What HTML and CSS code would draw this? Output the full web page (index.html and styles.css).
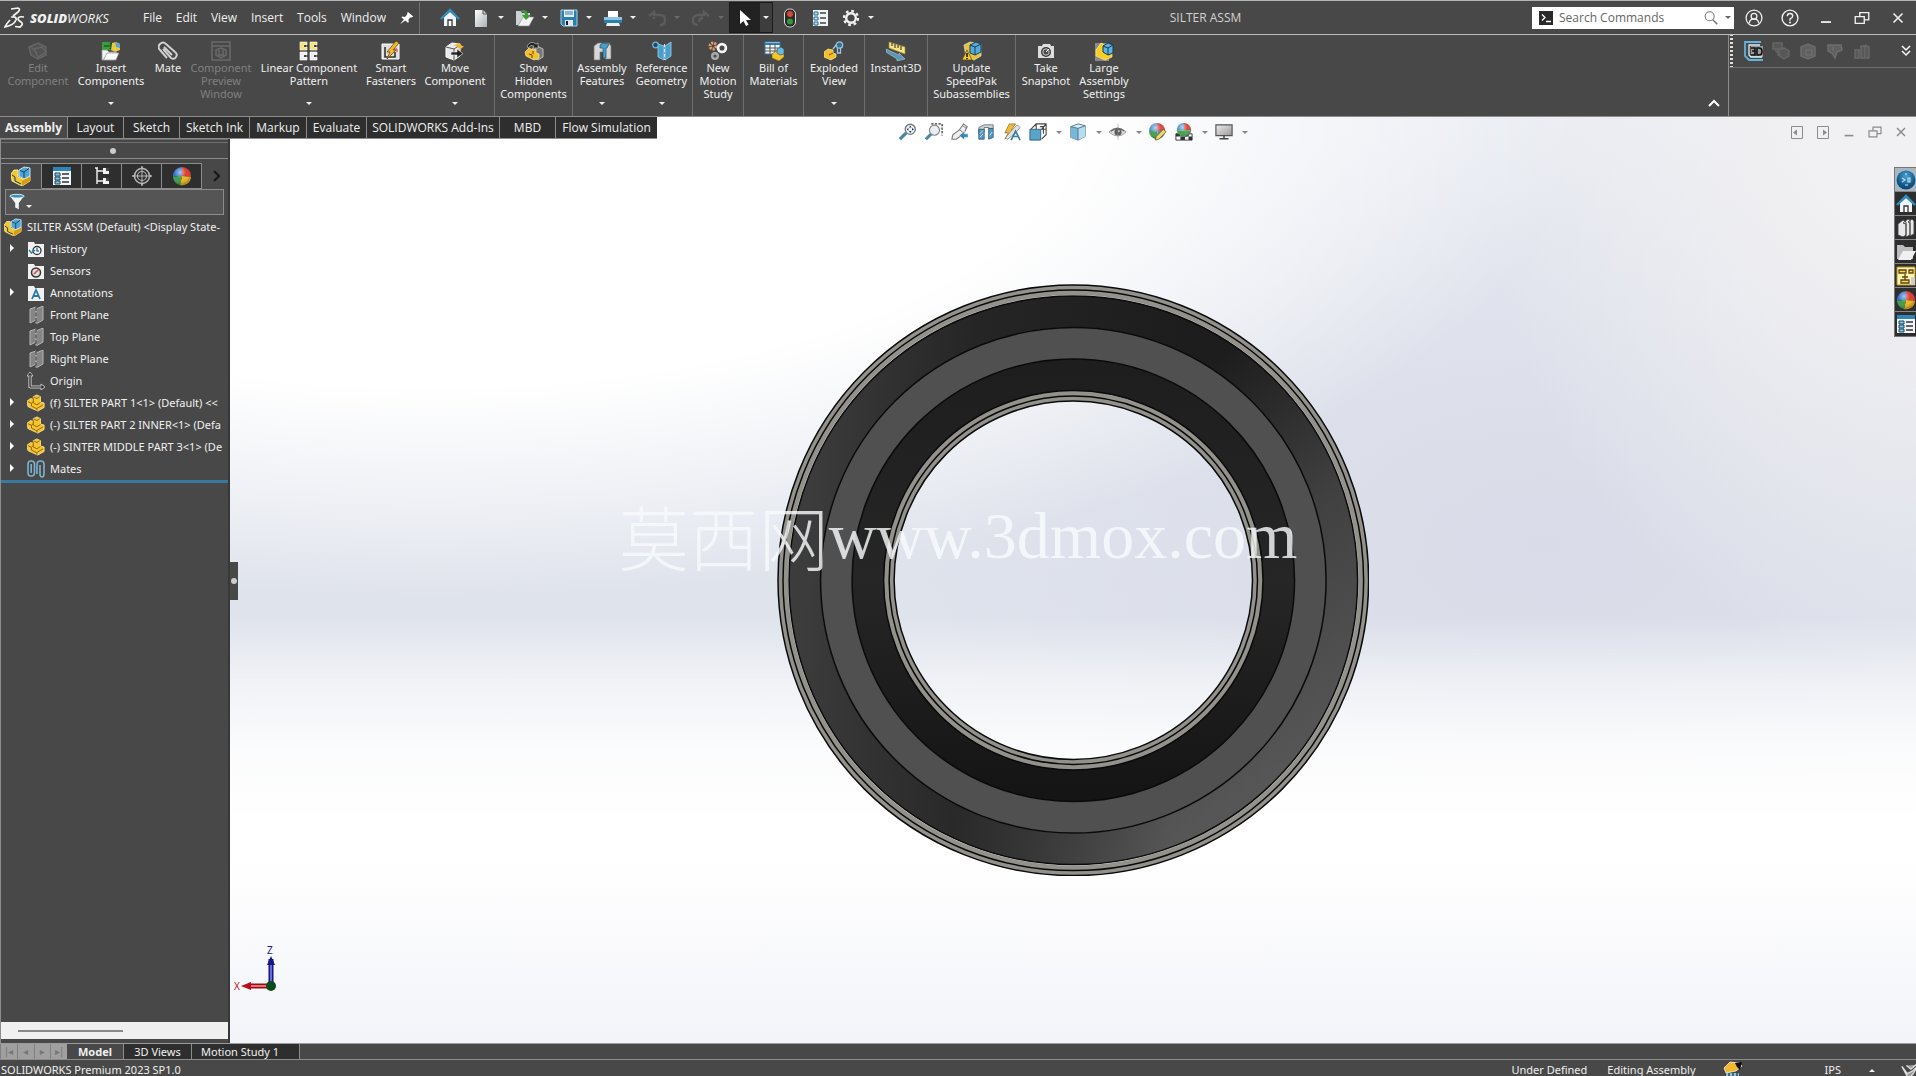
FILE: index.html
```html
<!DOCTYPE html>
<html lang="en">
<head>
<meta charset="utf-8">
<title>SILTER ASSM - SOLIDWORKS</title>
<link rel="stylesheet" href="styles.css">
</head>
<body>
<svg class="sprite" aria-hidden="true">
  <defs>
    <linearGradient id="steel" x1="0" y1="0" x2="1" y2="1"><stop offset="0" stop-color="#fff"/><stop offset="1" stop-color="#a9b0b5"/></linearGradient>
    <linearGradient id="screen" x1="0" y1="0" x2="1" y2="1"><stop offset="0" stop-color="#eee"/><stop offset="1" stop-color="#999"/></linearGradient>
    <radialGradient id="globe" cx=".5" cy=".3" r=".8"><stop offset="0" stop-color="#4aa0d0"/><stop offset=".6" stop-color="#125a8c"/><stop offset="1" stop-color="#073a60"/></radialGradient>
    <radialGradient id="shine" cx=".4" cy=".3" r=".7"><stop offset="0" stop-color="#fff" stop-opacity=".6"/><stop offset=".5" stop-color="#fff" stop-opacity="0"/><stop offset="1" stop-color="#000" stop-opacity=".3"/></radialGradient>
  </defs>
  <symbol id="home" viewBox="0 0 20 20"><path d="M4 9v9h12V9l-6-5z" fill="#eef4f8"/><path d="M1 11l9-9 9 9" fill="none" stroke="#2f8fc0" stroke-width="2.4"/><path d="M8 18v-6h4v6" fill="#fff" stroke="#333" stroke-width="1.3"/></symbol>
  <symbol id="page" viewBox="0 0 20 20"><path d="M4 2h8l4 4v13H4z" fill="url(#steel)"/><path d="M12 2v4h4" fill="none" stroke="#555"/></symbol>
  <symbol id="open" viewBox="0 0 20 20"><path d="M1 3h5l1 2h8v12H1z" fill="#c9d3d6"/><path d="M3 18L8 9h11l-5 9z" fill="#f4f4f4" stroke="#888" stroke-width=".6"/><path d="M5 3c4-2 8-1 8 4h3l-5 5-4-5h3c0-2-2-3-5-4z" fill="#3f9a35"/></symbol>
  <symbol id="save" viewBox="0 0 20 20"><path d="M2 2h16v16H4l-2-2z" fill="#2a7fae" stroke="#9fd0ea" stroke-width="1"/><path d="M5 2h10v7H5z" fill="#e6eef2"/><path d="M6 4h8M6 6h8" stroke="#2a7fae"/><path d="M6 12h8v6H6z" fill="#dfe7ea"/><path d="M8 13v4" stroke="#123" stroke-width="2"/></symbol>
  <symbol id="print" viewBox="0 0 20 20"><path d="M5 3h10v6H5z" fill="#fff"/><path d="M1 9h18v5H1z" fill="#8fc4e0"/><path d="M1 12h18v3H1z" fill="#2a7fae"/><path d="M4 15h12l1 3H3z" fill="#f2f2f2"/></symbol>
  <symbol id="undo" viewBox="0 0 20 20"><path d="M2 8l5-4v3h6q5 0 5 5t-5 5M7 11v-2" fill="none" stroke="#5c5c5c" stroke-width="2.4"/></symbol>
  <symbol id="redo" viewBox="0 0 20 20"><path d="M18 8l-5-4v3H8q-6 0-6 5t5 5M12 10q-4 0-4 4" fill="none" stroke="#5c5c5c" stroke-width="2.4"/></symbol>
  <symbol id="cursor" viewBox="0 0 20 20"><path d="M5 2v14l3.500-3 2.500 5 2.600-1.200L11 12h5z" fill="#fff"/></symbol>
  <symbol id="lights" viewBox="0 0 20 20"><rect x="4.500" y="1" width="11" height="18" rx="5" fill="#2b2b2b" stroke="#ddd"/><circle cx="10" cy="6" r="3" fill="#d8463c"/><circle cx="10" cy="13.500" r="3" fill="#2f9a3a"/></symbol>
  <symbol id="options" viewBox="0 0 20 20"><path d="M3 2h15v16H3z" fill="#eef3f6"/><path d="M4 4h4v3H4zM4 9h4v3H4zM4 14h4v3H4z" fill="#bfe0f0" stroke="#25688f"/><path d="M10 5h6M10 10h6M10 15h6" stroke="#444" stroke-width="1.4"/></symbol>
  <symbol id="gear" viewBox="0 0 20 20"><circle cx="10" cy="10" r="4.800" fill="none" stroke="#f2f2f2" stroke-width="2.400"/><circle cx="10" cy="10" r="7" fill="none" stroke="#f2f2f2" stroke-width="2.400" stroke-dasharray="2.750 2.750"/></symbol>
  <symbol id="pin" viewBox="0 0 20 20"><path d="M11 1l8 7-2 1-3 .5-2 3 .5 3-1 1.500-4-3.500L0 19l5.500-7L2 9l1.500-1 3.500.5 3-3z" fill="#fff"/></symbol>
  <symbol id="user" viewBox="0 0 20 20"><g fill="none" stroke="#f2f2f2" stroke-width="1.400"><circle cx="10" cy="10" r="8.800"/><circle cx="10" cy="8" r="3.200"/><path d="M4.500 16q1-5 5.500-5t5.500 5"/></g></symbol>
  <symbol id="help" viewBox="0 0 20 20"><g fill="none" stroke="#f2f2f2" stroke-width="1.500"><circle cx="10" cy="10" r="8.800"/><path d="M7 8q0-3 3-3t3 2.700Q13 9.500 10 11v2"/></g><circle cx="10" cy="15" r="1.100" fill="#f2f2f2"/></symbol>
  <symbol id="min" viewBox="0 0 20 20"><path d="M4.500 14.500h11" stroke="currentColor" stroke-width="2"/></symbol>
  <symbol id="restore" viewBox="0 0 20 20"><path d="M7.500 8V4h10v8h-5M2.500 8.500h10V16h-10z" fill="none" stroke="currentColor" stroke-width="1.500"/></symbol>
  <symbol id="close" viewBox="0 0 20 20"><path d="M5 5l10 10M15 5L5 15" stroke="currentColor" stroke-width="1.800"/></symbol>
  <symbol id="lens" viewBox="0 0 20 20"><circle cx="8.500" cy="8" r="5" fill="none" stroke="#777" stroke-width="1.200"/><path d="M12 12l5 5" stroke="#777" stroke-width="1.800"/></symbol>
  <symbol id="prompt" viewBox="0 0 14 14"><path d="M0 0h14v14H0z" fill="#2a2a2a"/><path d="M3 3.500L6 6.500l-3 3M7 10.500h5" fill="none" stroke="#fff" stroke-width="1.300"/></symbol>
  <symbol id="asm" viewBox="0 0 20 20"><path d="M0 8l3-4 4 0v7l5 2 7-3v5l-8 5L1 15z" fill="#f3c62c" stroke="#fff0a8" stroke-width=".9"/><path d="M11 15l8-5v5l-8 5z" fill="#d99c12"/><path d="M8 4l5-3 6 1v8l-6 3-5-3z" fill="#4ea6d6" stroke="#d6effa" stroke-width=".9"/><path d="M9 4.500l4 1.500v6M13 6l5-3.500M1 9l3 2v4l6 3" fill="none" stroke="#173f5a"/></symbol>
  <symbol id="part" viewBox="0 0 20 20"><path d="M0 8l4-3 3 1V3l4-2 4 2v6l4 1v5l-7 4L1 14z" fill="#f6c52b" stroke="#ffe79a" stroke-width=".9"/><path d="M1 8.500l4 2v3l6 3v2M5 10l2-1.500M11 16l7-4M7 4v6l4 2 4-2.500M8 3.500l3 1.500 3-2" fill="none" stroke="#8a5f08" stroke-width="1"/></symbol>
  <symbol id="editcomp" viewBox="0 0 20 20"><path d="M1 6l9-4 8 4v8l-8 4-7-4zM6 8l8-2 4 5-8 5zM3 6l6 6" fill="#525252" stroke="#666" stroke-width="1.400"/></symbol>
  <symbol id="insertcomp" viewBox="0 0 20 20"><path d="M1 1h9v8H1z" fill="#3a9c3e"/><path d="M3 5h8M9 2l3 3-3 3" fill="none" stroke="#173c1a" stroke-width="1.200"/><path d="M11 2l4-1 4 2v6l-5 2-4-2z" fill="#efc93a"/><path d="M14 1l5 2v4l-4-1z" fill="#54a9d8"/><path d="M1 19V9h5l2 2h8l-2 8z" fill="#f4f4f4" stroke="#999" stroke-width=".8"/><path d="M3 18l3-6h12l-3 7H2z" fill="#fff" stroke="#8a8a8a" stroke-width=".7"/></symbol>
  <symbol id="clip" viewBox="0 0 20 20"><path d="M5 8l8 9q3 2 5-1t-1-5L8 3Q5 0 2 3t0 6l7 8M6 6l8 8" fill="none" stroke="#d2d2d2" stroke-width="1.900"/></symbol>
  <symbol id="preview" viewBox="0 0 20 20"><path d="M1 1h18v18H1zM1 5h18M5 9l5-2 5 2v5l-5 3-5-3zM8 9v5h4V9" fill="none" stroke="#6a6a6a" stroke-width="1.500"/></symbol>
  <symbol id="pattern" viewBox="0 0 20 20"><g stroke="#fff" stroke-width=".6"><path d="M1 1h7v3H5v2h3v3H1zM11 1h7v3h-3v2h3v3h-7z" fill="#f5e27a"/><path d="M1 11h7v3H5v2h3v3H1zM11 11h7v3h-3v2h3v3h-7z" fill="#eee"/></g><path d="M6 4v2M16 4v2M6 14v2M16 14v2" stroke="#222" stroke-width="1.400"/></symbol>
  <symbol id="fastener" viewBox="0 0 20 20"><path d="M1 3h17v15H1z" fill="#ddd" stroke="#fff"/><path d="M4 6v10h10v-5" fill="none" stroke="#333" stroke-width="1.600"/><path d="M11 8h5v3" fill="none" stroke="#c33"/><path d="M15 0l3 2-6 7h3l-9 9 3-7H6z" fill="#f5b82c" stroke="#6b4a0a" stroke-width=".8"/></symbol>
  <symbol id="movecomp" viewBox="0 0 20 20"><path d="M1 6l6-4 8 1v12l-6 4-8-3z" fill="#e9e9e9" stroke="#fff"/><path d="M1 6l8 2v11M9 8l6-4" fill="none" stroke="#555"/><path d="M6 11h6V8l6 4.500-6 4.500v-3H6z" fill="#222" stroke="#eee" stroke-width=".6"/><path d="M9 5q5-6 8 0h2l-4 4-3-4" fill="#f0b83a"/></symbol>
  <symbol id="showhide" viewBox="0 0 20 20"><path d="M8 8l5-3 6 3v8l-5 3-6-3z" fill="#777" stroke="#ccc" stroke-width=".9"/><path d="M1 11l4-4 4 2 3-1v4l3 1v4l-5 2-8-4z" fill="#f3c02c" stroke="#fbe9a0" stroke-width=".7"/><path d="M5 13l3 1v3M9 10v3" fill="none" stroke="#5e4307"/><path d="M3 5q4-6 9-2l2-1v5H9l1-2Q7 3 4 7z" fill="#222" stroke="#bbb" stroke-width=".7"/></symbol>
  <symbol id="features" viewBox="0 0 20 20"><path d="M2 5l4-3h11l2 3v13h-6v-7H8v8H2z" fill="#d8d8d8" stroke="#777" stroke-width=".7"/><path d="M8 4l3-2 6 1-2 4h-1v10h-3V7L8 7z" fill="#4a9ecb" stroke="#1c4d69" stroke-width=".7"/></symbol>
  <symbol id="refgeo" viewBox="0 0 20 20"><path d="M6 3l6 2v14l-6-3zM13 5l6-4v14l-6 4z" fill="#4a9ecb" stroke="#9ed3ef" stroke-width=".8"/><path d="M12.500 3v16" stroke="#cfe9f7" stroke-dasharray="3 2"/><circle cx="3.500" cy="4" r="2.800" fill="#23485c" stroke="#6fb7dc" stroke-width="1.300"/></symbol>
  <symbol id="motion" viewBox="0 0 20 20"><circle cx="5" cy="5" r="3" fill="none" stroke="#e79a72" stroke-width="3" stroke-dasharray="2 1"/><circle cx="14" cy="7" r="3.900" fill="none" stroke="#f5f5f5" stroke-width="2.700"/><circle cx="7" cy="15" r="2.800" fill="none" stroke="#aaa" stroke-width="2.400"/></symbol>
  <symbol id="bom" viewBox="0 0 20 20"><path d="M1 1h15v12H1z" fill="#f2f6f8" stroke="#2a7fae"/><path d="M1 3h15" stroke="#2a7fae" stroke-width="2"/><path d="M1 7h15M1 10h15M6 3v10M11 3v10" stroke="#555"/><path d="M8 13l4-3 8 2v4l-5 4-7-3z" fill="#f3c62c" stroke="#8a6510" stroke-width=".7"/><path d="M13 8l4-2 3 2v5l-4 1-3-2z" fill="#6cb9e0" stroke="#1c4d69" stroke-width=".6"/></symbol>
  <symbol id="explode" viewBox="0 0 20 20"><path d="M0 11l4-3 5 1v3l3 1v3l-5 3-7-3z" fill="#f3c02c" stroke="#fbe9a0" stroke-width=".7"/><path d="M5 14l4-2" stroke="#765009"/><circle cx="15.500" cy="4" r="3.200" fill="#3c6e89" stroke="#8fc6e4" stroke-width="1.300"/><path d="M13.500 7v5h3V7M9 8l3-4" stroke="#9cc9df" fill="none" stroke-width="1.300"/></symbol>
  <symbol id="instant" viewBox="0 0 20 20"><path d="M3 1l16 5v7L3 7z" fill="#f4e486" stroke="#a78f20" stroke-width=".6"/><path d="M6 2v3M9 3v4M12 4v3M15 5v4" stroke="#333" stroke-width="1.100"/><path d="M0 8l13 6v-2l6 6-8 2v-2L0 11z" fill="#5b97b8" stroke="#c4dbe6" stroke-width=".5"/></symbol>
  <symbol id="speedpak" viewBox="0 0 20 20"><path d="M2 4l6-3 11 2v12l-7 4-8-3z" fill="#e8c53c" stroke="#ddd" stroke-width=".7"/><path d="M8 4l6-3 5 2v8l-6 3-5-2z" fill="#58abd8" stroke="#173f5a"/><path d="M13 6v8M8 4l5 2 6-3" stroke="#173f5a" fill="none"/><path d="M5 9l5 10H0z" fill="#f9c634" stroke="#5c430a" stroke-width=".7"/><path d="M5 12v4M5 17v1.200" stroke="#111" stroke-width="1.500"/></symbol>
  <symbol id="camera" viewBox="0 0 20 20"><path d="M2 5h4l1-2h7l1 2h3v12H2z" fill="#ddd"/><circle cx="10" cy="11" r="5" fill="#3a3a3a"/><circle cx="10" cy="11" r="3.200" fill="#4c4c4c" stroke="#ccc"/><path d="M10 11l3-3" stroke="#fff"/></symbol>
  <symbol id="bigasm" viewBox="0 0 20 20"><path d="M1 2h14v18H1z" fill="#8a8a8a"/><path d="M2 9l5-7 4 2v6l7 0v6l-7 3-9-4z" fill="#f8ce26" stroke="#ffeb90" stroke-width=".7"/><path d="M9 5l5-3 5 2v8l-5 2-5-3z" fill="#5cb4e4" stroke="#12384f"/><path d="M9 5l5 2v7M14 7l5-3" fill="none" stroke="#12384f"/></symbol>
  <symbol id="mark3d" viewBox="0 0 20 20"><path d="M7 5h12v11H7z" fill="#9a9a9a"/><path d="M17 1H1v14l4 4h14" fill="none" stroke="#62b3dc" stroke-width="1.800"/><path d="M16 4H5v10l2 2h11" fill="none" stroke="#d9eef8" stroke-width="1.300"/><path d="M7 7h4v3H8h3v4H7M13 7v7h2q3 0 3-3.500T15 7z" fill="none" stroke="#111" stroke-width="1.600"/></symbol>
  <symbol id="ghosta" viewBox="0 0 20 20"><path d="M2 2h9v6H2zM7 9l6-2 5 3v5l-5 3-6-4zM4 9l5 5" fill="#575757" stroke="#666" stroke-width="1.400"/></symbol>
  <symbol id="ghostb" viewBox="0 0 20 20"><path d="M3 6l7-3 7 3v9l-7 3-7-3zM8 9h6v5H8z" fill="#606060" stroke="#6c6c6c" stroke-width="1.500"/></symbol>
  <symbol id="ghostc" viewBox="0 0 20 20"><path d="M3 4h13l1 5-5 2-2 6-3-5-4-2zM8 6v4" fill="#606060" stroke="#6e6e6e" stroke-width="1.400"/></symbol>
  <symbol id="ghostd" viewBox="0 0 20 20"><path d="M3 9h4v8H3zM9 5h4v12H9zM13 4l4 2v11h-3" fill="#575757" stroke="#6a6a6a" stroke-width="1.400"/></symbol>
  <symbol id="zoomfit" viewBox="0 0 20 20"><path d="M1 18l7-7" stroke="#4a86aa" stroke-width="3.600"/><circle cx="12.500" cy="7" r="5.600" fill="#eef3f6" stroke="#777" stroke-width="1.500"/><path d="M12.500 3l-1.500 2h3zM12.500 11L11 9h3zM8.500 7l2-1.500v3zM16.500 7l-2-1.500v3z" fill="#123b57"/></symbol>
  <symbol id="zoomarea" viewBox="0 0 20 20"><path d="M7 1h12v13" fill="none" stroke="#333" stroke-dasharray="2.500 1.500" stroke-width="1.400"/><path d="M1 18l6-6" stroke="#4a86aa" stroke-width="3.400"/><circle cx="10.500" cy="8" r="5.600" fill="#e9eef1" stroke="#888" stroke-width="1.300"/></symbol>
  <symbol id="prevview" viewBox="0 0 20 20"><path d="M1 18l1-5 7-5 5-7 4 3-4 8-8 6z" fill="#f1f1f1" stroke="#777" stroke-width="1.200"/><path d="M9 7l5 4M13 3l4 3" stroke="#777"/><path d="M19 12h-4V9l-6 5 6 5v-3h4z" fill="#3d86ad" stroke="#fff" stroke-width=".6"/></symbol>
  <symbol id="section" viewBox="0 0 20 20"><path d="M2 5l6-3h10v4l-5 1V5H8v5L2 12z" fill="#cdd6da" stroke="#666" stroke-width=".9"/><path d="M2 7h6v11H2zM13 6h5v10l-5 2z" fill="#4e9ac2" stroke="#2c5872" stroke-width=".9"/><path d="M3 12l4-4M3 16l4-4M14 14l3-4" stroke="#cde7f4"/></symbol>
  <symbol id="annview" viewBox="0 0 20 20"><path d="M7 1h7L9 8h5L2 18l4-7H2z" fill="#f2b93d" stroke="#8b6c25" stroke-width=".8"/><path d="M16 2l3 3-5 6-9 7-2-2 7-8z" fill="#e4e4e4" stroke="#888" stroke-width=".9"/><path d="M9 19l5-10 5 10M11 15h6" fill="none" stroke="#3e7da0" stroke-width="1.900"/></symbol>
  <symbol id="orient" viewBox="0 0 20 20"><path d="M2 7l6-6h11v12l-5 5M8 1v6M14 7l5-6M19 7h-6M12 4h4v8" fill="none" stroke="#444" stroke-width="1.200"/><path d="M1 7h12v12H1z" fill="#5aa3c9" stroke="#2d5f7c"/></symbol>
  <symbol id="shaded" viewBox="0 0 20 20"><path d="M2 4l8-3 8 2v12l-8 4-8-3z" fill="#d5edf8" stroke="#4b6f83"/><path d="M2 4l8 2v13l-8-3z" fill="#78b7d7"/><path d="M10 6l8-3v12l-8 4z" fill="#b7dced"/><path d="M10 6v13M2 4l8 2 8-3" fill="none" stroke="#4b6f83"/></symbol>
  <symbol id="eye" viewBox="0 0 20 20"><path d="M0 10q9-9 19 0-9 9-19 0z" fill="#ddd" stroke="#999"/><path d="M2 9q8-6 15 0" fill="none" stroke="#666" stroke-width="1.500"/><circle cx="10" cy="10" r="4" fill="#5c5c5c"/><circle cx="11" cy="9" r="1" fill="#eee"/><path d="M10 1v18" stroke="#999" stroke-width=".6"/></symbol>
  <symbol id="ball" viewBox="0 0 20 20"><path d="M10 10V1A9 9 0 0 0 1 11z" fill="#2e6fc4"/><path d="M10 10V1A9 9 0 0 1 19 11z" fill="#d8392f"/><path d="M10 10l9 1A9 9 0 0 1 8 19z" fill="#efb51e"/><path d="M10 10L8 19A9 9 0 0 1 1 11z" fill="#3d9c46"/><circle cx="10" cy="10" r="9" fill="url(#shine)"/></symbol>
  <symbol id="appear" viewBox="0 0 20 20"><path d="M9 9V0A9 9 0 0 0 0 9z" fill="#4f8fd0"/><path d="M9 9V0A9 9 0 0 1 18 9z" fill="#d8493f"/><path d="M9 9H0A9 9 0 0 0 9 18z" fill="#3fa04a"/><path d="M9 9h9A9 9 0 0 1 9 18z" fill="#4f8fd0"/><circle cx="9" cy="9" r="9" fill="url(#shine)"/><path d="M16 7l3 3-8 8-4 1 1-4z" fill="#f1d568" stroke="#5e5222" stroke-width=".8"/></symbol>
  <symbol id="scene" viewBox="0 0 20 20"><path d="M1 12h18v7H1z" fill="#fff" stroke="#333"/><path d="M1 12h5v3H1zM11 12h4v3h-4zM6 15h5v4H6zM15 15h4v4h-4z" fill="#333"/><path d="M10 8V0A8 8 0 0 0 2 8z" fill="#4f8fd0"/><path d="M10 8V0A8 8 0 0 1 18 8z" fill="#d8493f"/><path d="M10 8H2A8 8 0 0 0 10 15z" fill="#3fa04a"/><path d="M10 8h8A8 8 0 0 1 10 15z" fill="#48a357"/><circle cx="10" cy="8" r="8" fill="url(#shine)"/></symbol>
  <symbol id="monitor" viewBox="0 0 20 20"><path d="M1 2h18v12H1z" fill="url(#screen)" stroke="#555" stroke-width="1.300"/><path d="M10 14v3M5 17.500h10" stroke="#444" stroke-width="1.700"/></symbol>
  <symbol id="dockl" viewBox="0 0 14 14"><path d="M1.500 1.500h11v12h-11z" fill="none" stroke="currentColor"/><path d="M3 7.500l4-3v6z" fill="currentColor"/></symbol>
  <symbol id="dockr" viewBox="0 0 14 14"><path d="M1.500 1.500h11v12h-11z" fill="none" stroke="currentColor"/><path d="M11 7.500l-4-3v6z" fill="currentColor"/></symbol>
  <symbol id="props" viewBox="0 0 20 20"><path d="M1 1h18v18H1z" fill="#f2f6f8"/><path d="M1 1h18v4H1z" fill="#2f85b5"/><path d="M3 7h5v3H3zM3 11h5v3H3zM3 15h5v3H3z" fill="#8cc4e0" stroke="#164763"/><path d="M10 8h7M10 12h7M10 16h7" stroke="#333" stroke-width="1.400"/></symbol>
  <symbol id="config" viewBox="0 0 20 20"><path d="M5 2v16M5 5h6M5 15h6M3 2h3" stroke="#f2f2f2" stroke-width="1.400" fill="none"/><path d="M11 2h6v6h-6zM11 12h6v6h-6z" fill="#f2f2f2"/><path d="M14 2h3v3h-3zM14 12h3v3h-3z" fill="#444"/></symbol>
  <symbol id="target" viewBox="0 0 20 20"><g fill="none" stroke="#b5b5b5"><path d="M10 0v20M0 10h20"/><circle cx="10" cy="10" r="7.500" stroke-width="1.500"/><circle cx="10" cy="10" r="4.500" stroke-width="1.200"/></g><path d="M10 0l2 3H8zM10 20l2-3H8zM0 10l3-2v4zM20 10l-3-2v4z" fill="#b5b5b5"/></symbol>
  <symbol id="funnel" viewBox="0 0 20 20"><path d="M2 3q8-3 16 0l-6 8v7l-4-2v-5z" fill="#f1f5f7"/><ellipse cx="10" cy="3.500" rx="8" ry="2" fill="#3b8fb8" stroke="#fff" stroke-width=".8"/></symbol>
  <symbol id="history" viewBox="0 0 18 18"><path d="M1 2h6l1 2h9v13H1z" fill="#f1f1f1"/><circle cx="10" cy="10.500" r="4" fill="#fff" stroke="#333" stroke-width="1.300"/><path d="M10 8v3h2M2 10l2.500 3L8 10" fill="none" stroke="#2f7ea8" stroke-width="1.500"/></symbol>
  <symbol id="sensor" viewBox="0 0 18 18"><path d="M1 2h6l1 2h9v13H1z" fill="#f1f1f1"/><circle cx="9" cy="10.500" r="4.500" fill="#ddd" stroke="#333" stroke-width="1.500"/><path d="M7 12l5-5" stroke="#c44" stroke-width="1.400"/></symbol>
  <symbol id="annot" viewBox="0 0 18 18"><path d="M1 2h6l1 2h9v13H1z" fill="#f1f1f1"/><path d="M5 15l4-9 4 9M6.500 12h5" fill="none" stroke="#2878a8" stroke-width="1.800"/></symbol>
  <symbol id="plane" viewBox="0 0 18 18"><path d="M3 3l6-2v13l-6 3zM9 3l7-3v14l-7 4z" fill="#858585" stroke="#b5b5b5"/><path d="M9 1v17" stroke="#333" stroke-dasharray="4 1.500"/></symbol>
  <symbol id="origin" viewBox="0 0 18 18"><path d="M3 16V3M3 15h14" stroke="#ccc" stroke-width="3.200"/><path d="M3 0l3 4H0zM18 15l-4-3v6z" fill="#222" stroke="#ccc" stroke-width=".9"/><path d="M3 15V4M3 15h12" stroke="#222" stroke-width="1.200"/></symbol>
  <symbol id="mates" viewBox="0 0 18 18"><g fill="none" stroke="#7cb3d0" stroke-width="1.600"><rect x="1" y="1" width="6.500" height="15" rx="3"/><path d="M4.200 4v9"/><path d="M10 14V4q0-3 3.500-3T17 4v10q0 3-2 3t-2-3V5"/></g></symbol>
  <symbol id="sphere3dx" viewBox="0 0 20 20"><circle cx="10" cy="10" r="9.500" fill="url(#globe)"/><path d="M6 8l3 2-3 2M12 8h2v4h-2zM9 15h3M10 3v2" stroke="#bfe0f0" fill="none" stroke-width="1.200"/></symbol>
  <symbol id="library" viewBox="0 0 20 20"><g fill="#e8e8e8" stroke="#444" stroke-width=".9"><path d="M2 6l5-4 3 2v13l-3 2-5-2zM7 5l5-4 2 1v15l-4 2V6zM12 4l4-3 2 2v13l-4 2V5z"/></g></symbol>
  <symbol id="folder" viewBox="0 0 20 20"><path d="M1 3h6l2 2h8v12H1z" fill="#bdbdbd"/><path d="M2 18l5-9h13l-5 9z" fill="#f0f0f0"/></symbol>
  <symbol id="palette" viewBox="0 0 20 20"><path d="M1 1h18v18H1z" fill="#fff3b0" stroke="#b8901b"/><path d="M3 4h7v3H3zM13 4h4v3h-4zM6 11h6M9 8v6M5 14h8v3H5z" fill="#ffd75c" stroke="#5a4510" stroke-width="1.300"/><path d="M15 11h4v8h-4z" fill="#ccd"/></symbol>
  <symbol id="rebuild" viewBox="0 0 20 20"><path d="M1 8l6-6 9 1 3 3-6 5-10 2z" fill="#f2b92e" stroke="#fff" stroke-width=".7"/><path d="M3 13h13v7H3z" fill="#8fc0dc"/><path d="M6 13v7M10 13v7M14 12v8" stroke="#244" stroke-width="1.400"/><path d="M12 3l7-1-2 8-3-3z" fill="#111"/></symbol>
  <symbol id="tags" viewBox="0 0 20 20"><path d="M1 6l6 8 6-3 6-6-6 10-5 4zM6 5l5 4 6-5" fill="#999" stroke="#ddd" stroke-width="1.500"/></symbol>
</svg>

<header class="titlebar">
  <div class="logo">
    <svg class="logo-mark" viewBox="0 0 22 22" aria-hidden="true"><path d="M7 2l7-1q3 1 0 4L9 9M7 10q6-1 5 3-2 5-11 7 2-4 5-7M20 10q-6-1-6 2 0 1 3 3t-1 5l-5-.500" fill="none" stroke="#f4f4f4" stroke-width="1.700"/></svg>
    <span class="logo-text"><b>SOLID</b>WORKS</span>
  </div>
  <nav class="menu">
    <button>File</button><button>Edit</button><button>View</button><button>Insert</button><button>Tools</button><button>Window</button>
  </nav>
  <button class="pin" aria-label="Pin menu"><svg class="ic"><use href="#pin"/></svg></button>
  <div class="quick">
    <button class="q-tool" aria-label="Home"><svg class="ic"><use href="#home"/></svg></button>
    <button class="split" aria-label="New"><svg class="ic"><use href="#page"/></svg><i class="down"></i></button>
    <button class="split" aria-label="Open"><svg class="ic"><use href="#open"/></svg><i class="down"></i></button>
    <button class="split" aria-label="Save"><svg class="ic"><use href="#save"/></svg><i class="down"></i></button>
    <button class="split" aria-label="Print"><svg class="ic"><use href="#print"/></svg><i class="down"></i></button>
    <button class="split" aria-label="Undo" disabled><svg class="ic"><use href="#undo"/></svg><i class="down"></i></button>
    <button class="split" aria-label="Redo" disabled><svg class="ic"><use href="#redo"/></svg><i class="down"></i></button>
    <button class="select" aria-label="Select"><span><svg class="ic"><use href="#cursor"/></svg></span><i class="down"></i></button>
    <button class="q-tool" aria-label="Rebuild"><svg class="ic"><use href="#lights"/></svg></button>
    <button class="q-tool" aria-label="File properties"><svg class="ic"><use href="#options"/></svg></button>
    <button class="split" aria-label="Options"><svg class="ic"><use href="#gear"/></svg><i class="down"></i></button>
  </div>
  <h1 class="doc-title">SILTER ASSM</h1>
  <label class="search">
    <svg class="search-prompt"><use href="#prompt"/></svg>
    <input type="text" placeholder="Search Commands" aria-label="Search Commands">
    <svg class="search-lens"><use href="#lens"/></svg><i class="down"></i>
  </label>
  <div class="window-buttons">
    <button aria-label="Account"><svg class="ic"><use href="#user"/></svg></button>
    <button aria-label="Help"><svg class="ic"><use href="#help"/></svg></button>
    <button aria-label="Minimize"><svg class="ic"><use href="#min"/></svg></button>
    <button aria-label="Restore"><svg class="ic"><use href="#restore"/></svg></button>
    <button aria-label="Close"><svg class="ic"><use href="#close"/></svg></button>
  </div>
</header>

<section class="ribbon">
  <div class="commands">
    <button disabled><svg class="ic"><use href="#editcomp"/></svg><span>Edit<br>Component</span></button>
    <button><svg class="ic"><use href="#insertcomp"/></svg><span>Insert<br>Components</span><i class="down"></i></button>
    <button><svg class="ic"><use href="#clip"/></svg><span>Mate</span></button>
    <button disabled><svg class="ic"><use href="#preview"/></svg><span>Component<br>Preview<br>Window</span></button>
    <button><svg class="ic"><use href="#pattern"/></svg><span>Linear Component<br>Pattern</span><i class="down"></i></button>
    <button><svg class="ic"><use href="#fastener"/></svg><span>Smart<br>Fasteners</span></button>
    <button><svg class="ic"><use href="#movecomp"/></svg><span>Move<br>Component</span><i class="down"></i></button>
    <button class="first"><svg class="ic"><use href="#showhide"/></svg><span>Show<br>Hidden<br>Components</span></button>
    <button class="first"><svg class="ic"><use href="#features"/></svg><span>Assembly<br>Features</span><i class="down"></i></button>
    <button><svg class="ic"><use href="#refgeo"/></svg><span>Reference<br>Geometry</span><i class="down"></i></button>
    <button class="first"><svg class="ic"><use href="#motion"/></svg><span>New<br>Motion<br>Study</span></button>
    <button class="first"><svg class="ic"><use href="#bom"/></svg><span>Bill of<br>Materials</span></button>
    <button class="first"><svg class="ic"><use href="#explode"/></svg><span>Exploded<br>View</span><i class="down"></i></button>
    <button class="first"><svg class="ic"><use href="#instant"/></svg><span>Instant3D</span></button>
    <button class="first"><svg class="ic"><use href="#speedpak"/></svg><span>Update<br>SpeedPak<br>Subassemblies</span></button>
    <button class="first"><svg class="ic"><use href="#camera"/></svg><span>Take<br>Snapshot</span></button>
    <button><svg class="ic"><use href="#bigasm"/></svg><span>Large<br>Assembly<br>Settings</span></button>
  </div>
  <button class="collapse" aria-label="Collapse ribbon"><svg viewBox="0 0 12 8"><path d="M1 7l5-5 5 5" fill="none" stroke="#fff" stroke-width="2"/></svg></button>
  <div class="side-dock">
    <div class="side-tools">
      <button aria-label="3D markup"><svg class="ic"><use href="#mark3d"/></svg></button>
      <button disabled aria-label="Capture view"><svg class="ic"><use href="#ghosta"/></svg></button>
      <button disabled aria-label="Publish"><svg class="ic"><use href="#ghostb"/></svg></button>
      <button disabled aria-label="Template"><svg class="ic"><use href="#ghostc"/></svg></button>
      <button disabled aria-label="Compare"><svg class="ic"><use href="#ghostd"/></svg></button>
      <button class="more" aria-label="More"><svg viewBox="0 0 10 12"><path d="M1 1l4 4 4-4M1 6l4 4 4-4" fill="none" stroke="#fff" stroke-width="1.500"/></svg></button>
    </div>
  </div>
</section>

<main class="workspace">
  <nav class="ribbon-tabs">
    <button class="active">Assembly</button><button>Layout</button><button>Sketch</button><button>Sketch Ink</button><button>Markup</button><button>Evaluate</button><button>SOLIDWORKS Add-Ins</button><button>MBD</button><button>Flow Simulation</button>
  </nav>

  <aside class="tree-panel">
    <div class="grip"><i></i></div>
    <div class="panel-tabs">
      <button class="active" aria-label="Feature tree"><svg class="ic"><use href="#asm"/></svg></button>
      <button aria-label="Properties"><svg class="ic"><use href="#props"/></svg></button>
      <button aria-label="Configurations"><svg class="ic"><use href="#config"/></svg></button>
      <button aria-label="Dimensions"><svg class="ic"><use href="#target"/></svg></button>
      <button aria-label="Display"><svg class="ic"><use href="#ball"/></svg></button>
      <button class="next" aria-label="More tabs"><svg viewBox="0 0 8 12"><path d="M1 1l5 5-5 5" fill="none" stroke="#161616" stroke-width="2"/></svg></button>
    </div>
    <button class="filter" aria-label="Filter tree"><svg class="ic"><use href="#funnel"/></svg><i class="down"></i></button>
    <ul class="tree">
      <li class="root"><svg><use href="#asm"/></svg>SILTER ASSM (Default) &lt;Display State-</li>
      <li class="open"><svg><use href="#history"/></svg>History</li>
      <li><svg><use href="#sensor"/></svg>Sensors</li>
      <li class="open"><svg><use href="#annot"/></svg>Annotations</li>
      <li><svg><use href="#plane"/></svg>Front Plane</li>
      <li><svg><use href="#plane"/></svg>Top Plane</li>
      <li><svg><use href="#plane"/></svg>Right Plane</li>
      <li><svg><use href="#origin"/></svg>Origin</li>
      <li class="open"><svg><use href="#part"/></svg>(f) SILTER PART 1&lt;1&gt; (Default) &lt;&lt;</li>
      <li class="open"><svg><use href="#part"/></svg>(-) SILTER PART 2 INNER&lt;1&gt; (Defa</li>
      <li class="open"><svg><use href="#part"/></svg>(-) SINTER MIDDLE PART 3&lt;1&gt; (De</li>
      <li class="open"><svg><use href="#mates"/></svg>Mates</li>
    </ul>
    <div class="tree-scroll"><i></i></div>
  </aside>

  <section class="viewport">
    <svg class="ring" viewBox="0 0 592 592" role="img" aria-label="Assembly model, top view">
      <defs>
        <linearGradient id="bevel" gradientUnits="userSpaceOnUse" x1="180" y1="60" x2="480" y2="500">
          <stop offset="0" stop-color="#1c1c1c"/><stop offset=".3" stop-color="#1d1d1d"/><stop offset=".62" stop-color="#404040"/><stop offset="1" stop-color="#565656"/>
        </linearGradient>
        <linearGradient id="bevel-left" x1="0" x2="1" y1=".5" y2=".55">
          <stop offset="0" stop-color="#3c3c3c"/><stop offset=".3" stop-color="#262626" stop-opacity=".9"/><stop offset=".7" stop-color="#262626" stop-opacity="0"/>
        </linearGradient>
        <linearGradient id="bore" x1="0" x2="0" y1="0" y2="1"><stop offset="0" stop-color="#1e1e1e"/><stop offset=".5" stop-color="#262626"/><stop offset="1" stop-color="#151515"/></linearGradient>
      </defs>
      <g fill="none">
        <circle cx="296" cy="296" r="290" stroke="#92918b" stroke-width="10"/>
        <circle cx="296" cy="296" r="268" stroke="url(#bevel)" stroke-width="32"/>
        <circle cx="296" cy="296" r="268" stroke="url(#bevel-left)" stroke-width="32"/>
        <circle cx="296" cy="296" r="237" stroke="#505050" stroke-width="32"/>
        <circle cx="296" cy="296" r="205" stroke="url(#bore)" stroke-width="32"/>
        <circle cx="296" cy="296" r="184" stroke="#92918b" stroke-width="10"/>
        <g stroke="#0a0a0a" stroke-width="1.500">
          <circle cx="296" cy="296" r="295"/><circle cx="296" cy="296" r="290"/><circle cx="296" cy="296" r="284"/><circle cx="296" cy="296" r="252.500"/><circle cx="296" cy="296" r="221"/><circle cx="296" cy="296" r="189.500"/><circle cx="296" cy="296" r="184"/><circle cx="296" cy="296" r="179"/>
        </g>
      </g>
    </svg>
    <div class="view-tools">
      <button aria-label="Zoom to fit"><svg class="ic"><use href="#zoomfit"/></svg></button>
      <button aria-label="Zoom to area"><svg class="ic"><use href="#zoomarea"/></svg></button>
      <button aria-label="Previous view"><svg class="ic"><use href="#prevview"/></svg></button>
      <button aria-label="Section view"><svg class="ic"><use href="#section"/></svg></button>
      <button aria-label="Annotation views"><svg class="ic"><use href="#annview"/></svg></button>
      <button class="wide" aria-label="View orientation"><svg class="ic"><use href="#orient"/></svg><i class="down"></i></button>
      <button class="wide" aria-label="Display style"><svg class="ic"><use href="#shaded"/></svg><i class="down"></i></button>
      <button class="wide" aria-label="Hide or show items"><svg class="ic"><use href="#eye"/></svg><i class="down"></i></button>
      <button aria-label="Edit appearance"><svg class="ic"><use href="#appear"/></svg></button>
      <button class="wide" aria-label="Apply scene"><svg class="ic"><use href="#scene"/></svg><i class="down"></i></button>
      <button class="wide" aria-label="View settings"><svg class="ic"><use href="#monitor"/></svg><i class="down"></i></button>
    </div>
    <div class="doc-buttons">
      <button aria-label="Dock left"><svg class="small"><use href="#dockl"/></svg></button>
      <button aria-label="Dock right"><svg class="small"><use href="#dockr"/></svg></button>
      <button aria-label="Minimize document"><svg class="mid"><use href="#min"/></svg></button>
      <button aria-label="Restore document"><svg class="mid"><use href="#restore"/></svg></button>
      <button aria-label="Close document"><svg class="mid"><use href="#close"/></svg></button>
    </div>
    <div class="task-pane">
      <button class="lit" aria-label="3DEXPERIENCE"><svg class="ic"><use href="#sphere3dx"/></svg></button>
      <button aria-label="Resources"><svg class="ic"><use href="#home"/></svg></button>
      <button aria-label="Design library"><svg class="ic"><use href="#library"/></svg></button>
      <button aria-label="File explorer"><svg class="ic"><use href="#folder"/></svg></button>
      <button aria-label="View palette"><svg class="ic"><use href="#palette"/></svg></button>
      <button aria-label="Appearances"><svg class="ic"><use href="#ball"/></svg></button>
      <button aria-label="Custom properties"><svg class="ic"><use href="#props"/></svg></button>
    </div>
    <button class="splitter" aria-label="Collapse panel"><i></i></button>
    <svg class="triad" viewBox="0 0 44 50" role="img" aria-label="View axes">
      <path d="M37 14v26" stroke="#15157a" stroke-width="5"/><path d="M37 14v26" stroke="#6a6ae0" stroke-width="2"/><path d="M37 11l-4 9h8z" fill="#15158a"/>
      <path d="M14 41h23" stroke="#8c1018" stroke-width="5"/><path d="M14 41h23" stroke="#f06a70" stroke-width="2"/><path d="M7 41l10-4v8z" fill="#b8101a"/>
      <circle cx="37" cy="41" r="5" fill="#0c4a1e"/>
      <text x="33" y="9" fill="#1b1b8c">Z</text><text x="0" y="45" fill="#b81822">X</text>
    </svg>
  </section>
</main>

<footer class="bottom">
  <div class="sheet-tabs">
    <div class="sheet-nav"><button aria-label="First">|◂</button><button aria-label="Previous">◂</button><button aria-label="Next">▸</button><button aria-label="Last">▸|</button></div>
    <button class="active">Model</button><button>3D Views</button><button class="long">Motion Study 1</button>
  </div>
  <div class="status">
    <span class="product">SOLIDWORKS Premium 2023 SP1.0</span>
    <span class="state">Under Defined</span>
    <span class="mode">Editing Assembly</span>
    <svg class="ic"><use href="#rebuild"/></svg>
    <span class="units">IPS</span>
    <i class="up"></i>
    <svg class="tag-icon"><use href="#tags"/></svg>
  </div>
</footer>

<div class="watermark"><span class="han">莫西网</span>www.3dmox.com</div>
</body>
</html>
```
FILE: styles.css
```css
* { box-sizing: border-box; }

:root {
  --chrome: #484848;
  --chrome-dark: #2e2e2e;
  --line: #8c8c8c;
  --line-soft: #6e6e6e;
  --text: #f0f0f0;
}

body {
  margin: 0;
  height: 100vh;
  overflow: hidden;
  display: flex;
  flex-direction: column;
  background: var(--chrome);
  color: var(--text);
  font: 12px/16px "Open Sans", "Noto Sans", sans-serif;
}

button {
  margin: 0;
  padding: 0;
  border: 0;
  background: none;
  color: inherit;
  font: inherit;
  display: flex;
  align-items: center;
  justify-content: center;
  white-space: nowrap;
}

.sprite { position: absolute; width: 0; height: 0; }
.ic { width: 20px; height: 20px; flex: none; display: block; }

.down, .up {
  flex: none;
  width: 0;
  height: 0;
  border: 3px solid transparent;
  border-top-color: currentColor;
  border-bottom-width: 0;
}
.up { border-top-width: 0; border-bottom: 3px solid currentColor; }

/* Title bar */
.titlebar {
  flex: none;
  height: 35px;
  display: flex;
  align-items: center;
  border-top: 1px solid #b4b4b4;
  border-bottom: 1px solid #bdbdbd;
}
.logo { display: flex; align-items: center; width: 135px; padding-left: 4px; gap: 4px; }
.logo-mark { width: 22px; height: 22px; }
.logo-text { font: italic 13px/20px "Open Sans", sans-serif; }
.logo-text b { font-weight: 800; }
.menu { display: flex; justify-content: space-between; width: 259px; padding: 0 4px; }
.menu button { padding: 0 4px; height: 28px; }
.pin { width: 26px; height: 32px; border-right: 1px solid var(--line-soft); }
.pin .ic { width: 14px; height: 14px; }
.quick { display: flex; align-items: center; height: 33px; padding-left: 15px; }
.q-tool { width: 30px; }
.split { width: 44px; gap: 7px; }
.split:disabled { color: #6a6a6a; }
.quick .select {
  width: 44px;
  height: 31px;
  margin: 0 2px 0 0;
  border: 1px solid #1b1b1b;
  background: #3d3d3d;
}
.select span { width: 30px; height: 29px; background: #222; display: grid; place-items: center; }
.select .down { margin: auto; }
.doc-title { flex: 1; margin: 0; font: inherit; text-align: center; color: #d2d2d2; }
.search {
  width: 202px;
  height: 22px;
  display: flex;
  align-items: center;
  padding: 0 3px 0 7px;
  background: #fff;
  color: #666;
}
.search-prompt { width: 14px; height: 14px; }
.search-lens { width: 18px; height: 18px; margin-right: 5px; }
.search input {
  flex: 1;
  min-width: 0;
  border: 0;
  outline: 0;
  padding: 0 0 0 6px;
  background: none;
  font: inherit;
  color: #555;
}
.search input::placeholder { color: #666; opacity: 1; }
.window-buttons { display: flex; width: 180px; margin-left: 2px; }
.window-buttons button { flex: 1; height: 28px; }
.window-buttons .ic { width: 18px; height: 18px; }

/* Ribbon */
.ribbon { flex: none; height: 82px; display: flex; border-bottom: 1px solid var(--line); }
.commands {
  flex: 1;
  display: grid;
  grid-template-columns: 76px 70px 44px 62px 114px 50px 78px 78px 59px 61px 51px 60px 61px 63px 88px 61px 56px;
}
.commands button {
  flex-direction: column;
  justify-content: flex-start;
  padding: 6px 0 11px;
  font: 11px/13px "Noto Sans", sans-serif;
}
.commands button:disabled { color: #808080; }
.commands .first { border-left: 1px solid var(--line-soft); }
.commands .down { margin-top: auto; }
.collapse { width: 28px; align-items: flex-end; padding-bottom: 9px; }
.collapse svg { width: 12px; height: 8px; }
.side-dock { width: 188px; border-left: 1px solid var(--line); }
.side-tools {
  height: 33px;
  display: flex;
  align-items: center;
  padding: 0 5px 0 11px;
  border-bottom: 1px solid var(--line-soft);
  background: linear-gradient(#ddd 50%, transparent 50%) 1px 3px / 3px 4px repeat-y;
}
.side-tools button { width: 27px; }
.side-tools .more { margin-left: auto; width: 10px; }
.more svg { width: 10px; height: 12px; }

/* Workspace */
.workspace { flex: 1; min-height: 0; display: flex; position: relative; }
.ribbon-tabs {
  position: absolute;
  top: 0;
  left: 0;
  z-index: 2;
  display: grid;
  grid-template-columns: 67px 56px 56px 70px 57px 60px 133px 56px 102px;
  height: 22px;
}
.ribbon-tabs button {
  border-left: 1px solid var(--line);
  border-bottom: 1px solid var(--line);
  background: var(--chrome-dark);
}
.ribbon-tabs .active { border-left: 0; background: var(--chrome); font-weight: 700; }

.tree-panel {
  flex: none;
  width: 230px;
  padding-top: 22px;
  display: flex;
  flex-direction: column;
  border-left: 1px solid var(--line);
  border-right: 2px solid #383838;
  background: var(--chrome);
}
.grip { height: 20px; padding-right: 3px; border-bottom: 1px solid var(--line); border-top: 4px double var(--line-soft); display: grid; place-items: center; }
.grip i, .splitter i { width: 6px; height: 6px; border-radius: 50%; background: #ccc; }
.panel-tabs { display: flex; margin-top: 4px; height: 26px; }
.panel-tabs button {
  width: 40px;
  border: solid var(--line);
  border-width: 1px 1px 1px 0;
  background: var(--chrome-dark);
}
.panel-tabs .active { width: 41px; background: none; border-bottom-color: transparent; }
.panel-tabs .next { flex: 1; width: auto; padding-left: 5px; background: none; border-color: transparent; }
.next svg { width: 8px; height: 12px; }
.filter {
  flex: none;
  height: 26px;
  margin: 0 4px 0 4px;
  padding: 0 2px;
  justify-content: flex-start;
  border: 1px solid var(--line);
  background: #555;
}
.filter .ic { width: 18px; height: 18px; }
.filter .down { margin-top: 8px; }
.tree {
  flex: none;
  list-style: none;
  margin: 1px 0 0;
  padding: 0;
  border-bottom: 3px solid #3a78a0;
  font: 11px/16px "Noto Sans", sans-serif;
}
.tree li {
  height: 22px;
  display: flex;
  align-items: center;
  gap: 5px;
  padding-left: 26px;
  white-space: nowrap;
  position: relative;
}
.tree .root { padding-left: 3px; gap: 5px; }
.tree svg { width: 18px; height: 18px; flex: none; }
.tree .open::before {
  content: "";
  position: absolute;
  left: 9px;
  top: 6px;
  border: 4px solid transparent;
  border-left-color: #fff;
  border-right-width: 0;
}
.tree-scroll { height: 17px; margin: auto 0 4px; padding: 8px 0 0 17px; background: #f0f0f0; }
.tree-scroll i { display: block; width: 105px; height: 2px; background: #888; }

.viewport {
  flex: 1;
  min-width: 0;
  position: relative;
  display: grid;
  place-items: center;
  background:
    linear-gradient(#fff0 80%, #f3f4f9 100%),
    linear-gradient(#fff0 54%, #fff8 61%, #fffd 68%, #fff 76%),
    radial-gradient(ellipse 68% 52% at 12% 0, #fff 0 56%, #fff0 100%),
    radial-gradient(ellipse 26% 60% at 100% 0, #f1f0f2 0 20%, #f1f0f200 100%),
    radial-gradient(ellipse 40% 45% at 78% 46%, #d9dce8, #d9dce800),
    linear-gradient(#e9ecf3, #dfe3ec 50%, #e2e6ef);
}
.ring { height: 64%; aspect-ratio: 1; }
.view-tools { position: absolute; top: 5px; left: 665px; display: flex; color: #888; }
.view-tools button { width: 26px; height: 20px; }
.view-tools .wide { width: 40px; gap: 9px; }
.view-tools .ic { width: 18px; height: 18px; }
.doc-buttons { position: absolute; top: 5px; right: 2px; display: flex; color: #8c8c8c; }
.doc-buttons button { width: 26px; height: 20px; }
.small { width: 14px; height: 14px; }
.mid { width: 16px; height: 16px; }
.task-pane { position: absolute; top: 50px; right: 0; width: 22px; border: 1px solid #777; border-right: 0; background: var(--chrome-dark); }
.task-pane button { width: 21px; height: 24px; border-bottom: 1px solid #888; }
.task-pane button:last-child { border-bottom: 0; }
.task-pane .lit { background: #a9b7c2; }
.splitter { position: absolute; left: 0; top: 445px; width: 8px; height: 38px; background: var(--chrome); }
.triad { position: absolute; left: 4px; bottom: 48px; width: 44px; height: 50px; font: 10px "Noto Sans", sans-serif; overflow: visible; }

/* Sheet tabs and status bar */
.bottom { flex: none; height: 33px; overflow: hidden; border-top: 1px solid #9a9a9a; font: 11px/16px "Noto Sans", sans-serif; }
.sheet-tabs {
  display: grid;
  grid-template-columns: 67px 57px 68px 108px;
  height: 16px;
  border-bottom: 1px solid var(--line);
}
.sheet-tabs > button { line-height: 14px; background: var(--chrome-dark); border-right: 1px solid var(--line); }
.sheet-tabs .active { background: var(--chrome); font-weight: 700; }
.sheet-tabs .long { justify-content: flex-start; padding-left: 9px; }
.sheet-nav { display: flex; background: #a0a0a0; color: #777; }
.sheet-nav button { flex: 1; border-left: 1px solid #808080; font: 10px/14px "DejaVu Sans", sans-serif; }
.status { display: flex; align-items: center; height: 20px; padding-left: 1px; white-space: nowrap; }
.product { flex: 1; }
.mode { margin: 0 27px 0 20px; }
.units { margin: 0 28px 0 82px; }
.tag-icon { width: 18px; height: 18px; margin-left: 26px; margin-right: -3px; }

.watermark {
  position: fixed;
  inset: 0 0 4px;
  display: flex;
  align-items: center;
  justify-content: center;
  pointer-events: none;
  color: #f8fafdd0;
  font: 66px/80px "Liberation Serif", serif;
  white-space: nowrap;
}
.han { font: 300 70px/80px "Noto Sans CJK SC", sans-serif; }
```
